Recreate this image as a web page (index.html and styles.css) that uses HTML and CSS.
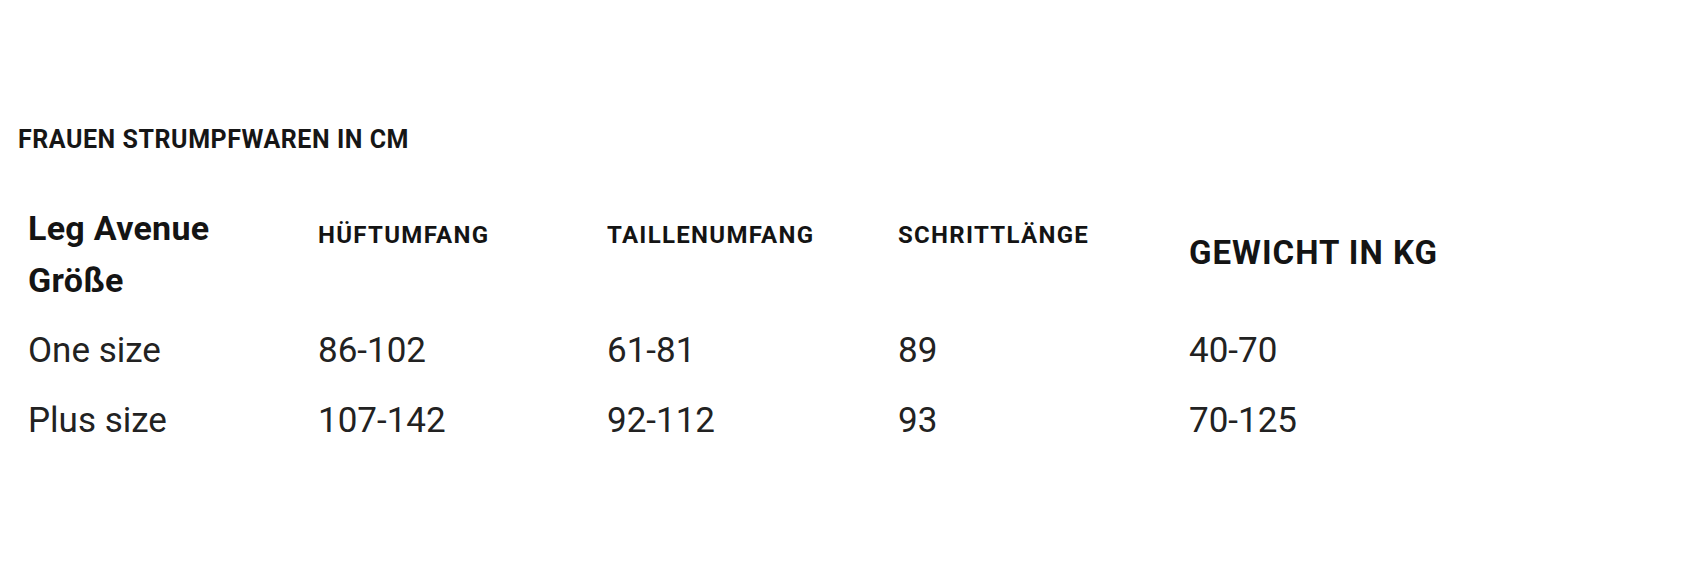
FILE: index.html
```html
<!DOCTYPE html>
<html lang="de">
<head>
<meta charset="utf-8">
<title>Frauen Strumpfwaren in cm</title>
<link rel="stylesheet" href="styles.css">
</head>
<body>
<main class="page">
  <h2 class="title">FRAUEN STRUMPFWAREN IN CM</h2>
  <div class="size-table">
    <div class="cell head-main">Leg Avenue<br>Größe</div>
    <div class="cell head-small">HÜFTUMFANG</div>
    <div class="cell head-small">TAILLENUMFANG</div>
    <div class="cell head-small">SCHRITTLÄNGE</div>
    <div class="cell head-large">GEWICHT IN KG</div>

    <div class="cell data">One size</div>
    <div class="cell data">86-102</div>
    <div class="cell data">61-81</div>
    <div class="cell data">89</div>
    <div class="cell data">40-70</div>

    <div class="cell data">Plus size</div>
    <div class="cell data">107-142</div>
    <div class="cell data">92-112</div>
    <div class="cell data">93</div>
    <div class="cell data">70-125</div>
  </div>
</main>
</body>
</html>
```
FILE: styles.css
```css
html, body {
  margin: 0;
  padding: 0;
  background: #ffffff;
}

body {
  font-family: Roboto, "Liberation Sans", Arial, sans-serif;
  color: #1b1b1b;
}

.page {
  padding: 125px 0 0 18px;
}

.title {
  margin: 0;
  font-size: 25px;
  line-height: 30px;
  font-weight: 700;
  color: #161616;
  letter-spacing: 0.55px;
}

.size-table {
  display: grid;
  grid-template-columns: 290px 289px 291px 291px 300px;
  grid-template-rows: 114px 70px 70px;
  margin: 47px 0 0 10px;
}

.cell {
  align-self: start;
}

.head-main {
  font-size: 34px;
  line-height: 52px;
  font-weight: 700;
  color: #141414;
  letter-spacing: 0.3px;
}

.head-small {
  font-size: 24px;
  line-height: 28px;
  font-weight: 700;
  margin-top: 19px;
  color: #141414;
  letter-spacing: 1.3px;
}

.head-large {
  font-size: 33px;
  line-height: 40px;
  font-weight: 700;
  margin-top: 31px;
  color: #141414;
  letter-spacing: 1px;
}

.data {
  font-size: 35px;
  line-height: 70px;
  font-weight: 400;
  color: #222222;
}
```
